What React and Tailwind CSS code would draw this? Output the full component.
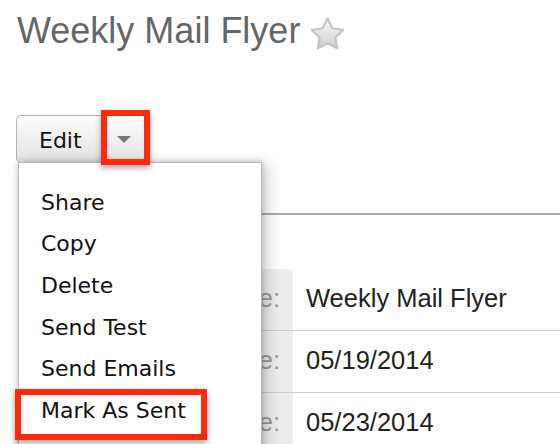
import React from "react";

const sans = { fontFamily: '"Liberation Sans", Arial, sans-serif' };
const grande = { fontFamily: '"DejaVu Sans", "Liberation Sans", sans-serif' };

function Star() {
  return (
    <svg width="35" height="33" viewBox="0 0 36 34" className="ml-[10px] mt-[4px]">
      <defs>
        <linearGradient id="sg" x1="0" y1="0" x2="0" y2="1">
          <stop offset="0" stopColor="#fbfbfb" />
          <stop offset="1" stopColor="#cdcdcd" />
        </linearGradient>
      </defs>
      <polygon
        points="18,1.5 23,11.6 34.2,13.3 26.1,21.1 28,32.3 18,27 8,32.3 9.9,21.1 1.8,13.3 13,11.6"
        fill="url(#sg)"
        stroke="#c4c4c4"
        strokeWidth="2.2"
        strokeLinejoin="round"
      />
    </svg>
  );
}

const items = [
  "Share",
  "Copy",
  "Delete",
  "Send Test",
  "Send Emails",
  "Mark As Sent",
  "View Change Log",
];

const rows = [
  ["Name:", "Weekly Mail Flyer"],
  ["Start Date:", "05/19/2014"],
  ["End Date:", "05/23/2014"],
];

export default function App() {
  return (
    <div className="relative w-[560px] h-[444px] overflow-hidden bg-white">
      <div className="flex items-start pl-[17px] pt-[13px]">
        <h1 className="text-[36px] leading-[36px] text-[#666666]" style={sans}>
          Weekly Mail Flyer
        </h1>
        <Star />
      </div>

      <div className="mt-[65px] ml-[16px] flex h-[48px] w-[133px] rounded-[5px] border border-[#b3b3b3] bg-gradient-to-b from-[#fdfdfd] to-[#e3e3e3]">
        <div
          className="flex items-center pl-[22px] pt-[3px] text-[22px] leading-none text-[#111]"
          style={grande}
        >
          Edit
        </div>
        <div className="ml-auto flex w-[49px] items-center justify-center">
          <svg width="14" height="7" viewBox="0 0 14 7">
            <polygon points="0,0 14,0 7,7" fill="#777" />
          </svg>
        </div>
      </div>

      <div className="ml-[20px] mt-[50px] h-[2px] bg-[#acacac]" />

      <div className="ml-[20px] mt-[54px]" style={sans}>
        {rows.map(([label, value]) => (
          <div key={label} className="flex h-[62px] border-b border-[#cccccc]">
            <div className="w-[273px] bg-[#eeeeee] pr-[13px] text-right text-[25.5px] leading-[58px] text-[#999999]">
              {label}
            </div>
            <div className="pl-[13px] text-[25.5px] leading-[58px] text-[#222222]">
              {value}
            </div>
          </div>
        ))}
      </div>

      <div
        className="absolute left-[18px] top-[162px] h-[320px] w-[244px] border border-[#b8b8b8] bg-white pl-[22px] pt-[18.5px] shadow-[0_0_6px_rgba(0,0,0,0.2),6px_2px_14px_rgba(0,0,0,0.18)]"
        style={grande}
      >
        {items.map((t) => (
          <div key={t} className="text-[22px] leading-[41.7px] text-[#111]">
            {t}
          </div>
        ))}
      </div>

      <div className="absolute left-[101px] top-[110px] h-[55px] w-[49px] border-[6px] border-[#ff2a0c] shadow-[0_3px_6px_rgba(0,0,0,0.35)]" />
      <div className="absolute left-[15px] top-[389px] h-[51px] w-[192px] border-[6px] border-[#ff2a0c] shadow-[0_3px_6px_rgba(0,0,0,0.35)]" />
    </div>
  );
}
